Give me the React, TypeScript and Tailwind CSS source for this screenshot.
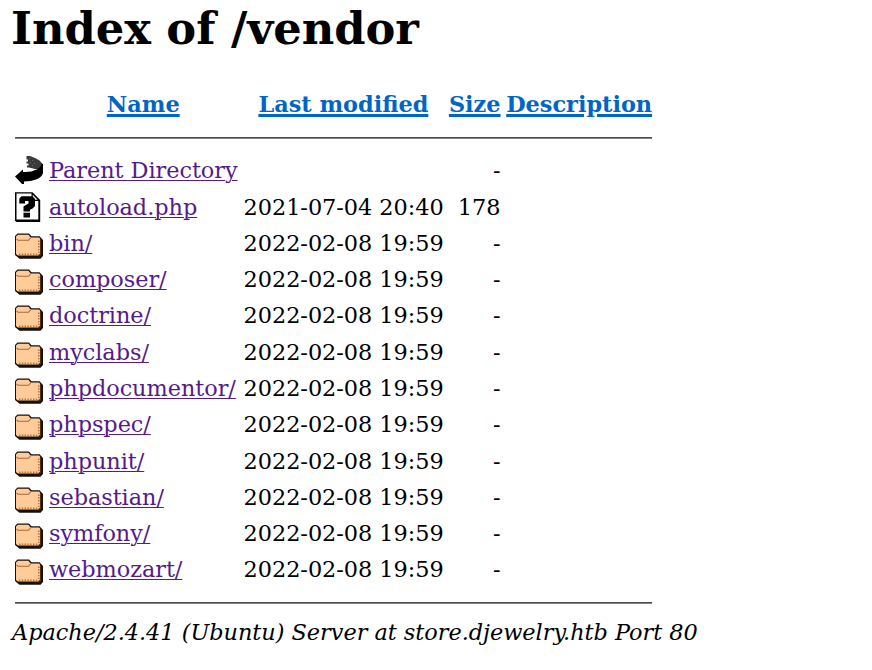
type Kind = "back" | "unknown" | "folder";
type Entry = { name: string; kind: Kind; modified?: string; size: string };

const entries: Entry[] = [
  { name: "Parent Directory", kind: "back", size: "-" },
  { name: "autoload.php", kind: "unknown", modified: "2021-07-04 20:40", size: "178" },
  ...["bin/", "composer/", "doctrine/", "myclabs/", "phpdocumentor/", "phpspec/", "phpunit/", "sebastian/", "symfony/", "webmozart/"].map(
    (name): Entry => ({ name, kind: "folder", modified: "2022-02-08 19:59", size: "-" }),
  ),
];

const columns = "grid grid-cols-[28px_189.3px_199.8px_51.7px_146px] gap-x-[5.6px]";

function BackIcon() {
  return (
    <svg className="block h-[31px] w-7" viewBox="0 0 28 31">
      <path d="M11.500 1H15l5 2 4.500 2.500 3.200 3.500v5H20l-6-1.500H12V10.500h1.500V8.500H11.500V6.500h1.500V4.500H11.500z" fill="#3a3a3a" />
      <path d="M14 3.500h1M17 5.500h1M15 7.500h1M19 8.500h1M17 10.500h1" stroke="#666" strokeWidth="1" />
      <path d="M0 21.500 8 14.500V17q8 .5 13.500-2.500Q26 12 26.500 9h1.500V18q-1 4-7 6.500-5 2-12 2V29H7z" fill="#000" />
    </svg>
  );
}

function UnknownIcon() {
  return (
    <svg className="block h-[31px] w-7" viewBox="0 0 28 31">
      <path d="M0 .3h17.500L25.200 8v22H1.500L0 28.500z" fill="#000" />
      <path d="M1.500 1.600H16.500V9H23.300V27.600H1.500z" fill="#fff" />
      <path d="M17.700 2.800V7.700H22.600z" fill="#eee" />
      <path d="M4.300 11.500V6.500L6.500 4.300H17.500L20 7v7L17.500 16.500l-2.500 1.300V19.500H8.500v-5l5-3V9H10V11.500zM8.500 20.800H15V25.400H8.500z" fill="#000" />
    </svg>
  );
}

function FolderIcon() {
  return (
    <svg className="block h-[31px] w-7" viewBox="0 0 28 31">
      <path d="M0 8 2.500 5.500H14L16.500 8.300H24.500L28 12V28L25.500 30.800H4.500L0 27z" fill="#17100b" />
      <path d="M1 8.500 3 6.700H13.500L15.500 9.500H24L25 10.500V25.500L23.500 27.500H3L1 26z" fill="#ffcc99" />
      <path d="M1.500 10.800 3 12.300H13.500L15.500 10" fill="none" stroke="#a9683a" strokeWidth="1.100" />
      <path d="M4 26.300H23" stroke="#bd7437" strokeWidth="1.600" strokeDasharray="1.400 1.400" />
      <path d="M23.800 12.500V27" stroke="#bd7437" strokeWidth="1.600" strokeDasharray="1.400 1.400" />
      <path d="M25.600 11V27L24 28.500" fill="none" stroke="#704321" strokeWidth=".7" />
    </svg>
  );
}

const icons = { back: BackIcon, unknown: UnknownIcon, folder: FolderIcon };

function Rule() {
  return <div className="h-[2px] w-[637px] border-t border-[#4c4c4c] bg-[#858585]" />;
}

function Heading({ children }: { children: string }) {
  return (
    <a className="justify-self-center whitespace-nowrap text-[#0066c6] underline decoration-3 underline-offset-[2px]">
      {children}
    </a>
  );
}

export default function App() {
  return (
    <main className="h-[670px] w-[872px] overflow-hidden bg-white font-['DejaVu_Serif',serif] text-[22.4px] text-black">
      <h1 className="h-[90px] pt-px pl-[11px] text-[44.8px] leading-[56px] font-bold tracking-[-0.05px]">Index of /vendor</h1>
      <section className="pl-[15px]">
        <div className={`${columns} h-[47px] leading-7 font-bold`}>
          <span />
          <Heading>Name</Heading>
          <Heading>Last modified</Heading>
          <Heading>Size</Heading>
          <Heading>Description</Heading>
        </div>
        <Rule />
        <div className="h-[463px] pt-[16.400px]">
          {entries.map(({ name, kind, modified, size }) => {
            const Icon = icons[kind];
            return (
              <div key={name} className={`${columns} h-[36.270px] leading-[31px]`}>
                <Icon />
                <a className="pl-[0.400px] tracking-[-0.050px] whitespace-nowrap text-[#551a8b]">
                  <span className="underline decoration-1 underline-offset-[2px]">{name}</span>
                </a>
                <span className="pr-[0.700px] text-right tracking-[-0.030px] whitespace-nowrap">{modified}</span>
                <span className="text-right">{size}</span>
              </div>
            );
          })}
        </div>
        <Rule />
      </section>
      <address className="pt-3 pl-3 leading-8 tracking-[-0.020px] whitespace-nowrap italic">Apache/2.4.41 (Ubuntu) Server at store.djewelry.htb Port 80</address>
    </main>
  );
}
